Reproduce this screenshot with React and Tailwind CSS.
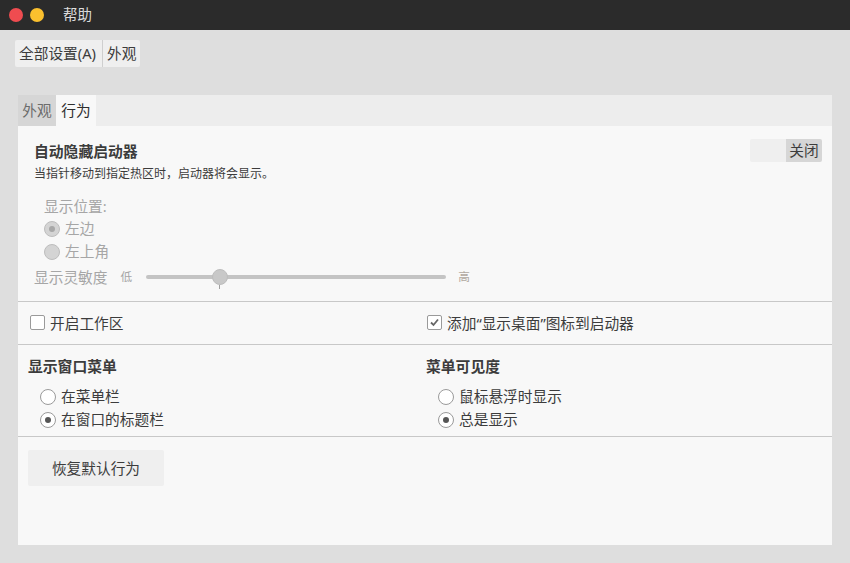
import React from 'react';

const font = { fontFamily: '"Noto Sans", "Noto Sans CJK SC", sans-serif' };

const Radio = ({ checked, disabled, label }) => (
    <div className="flex items-center gap-[5px] h-[23px]">
        <span
            className={
                'w-[16px] h-[16px] rounded-full border flex items-center justify-center ' +
                (disabled ? 'border-[#bdbdbd] bg-[#d4d4d4]' : 'border-[#9a9a9a] bg-white')
            }
        >
            {checked && <span className={'w-[6px] h-[6px] rounded-full ' + (disabled ? 'bg-[#a8a8a8]' : 'bg-[#555]')}></span>}
        </span>
        <span className={'text-[14.7px] ' + (disabled ? 'text-[#a6a6a6]' : 'text-[#3c3c3c]')}>{label}</span>
    </div>
);

const Checkbox = ({ checked, label }) => (
    <div className="flex items-center gap-[5px]">
        <span className="w-[15px] h-[15px] rounded-[2px] border border-[#9a9a9a] bg-white flex items-center justify-center">
            {checked && (
                <svg width="11" height="11" viewBox="0 0 11 11">
                    <path d="M2 5.5 L4.5 8 L9 2.5" fill="none" stroke="#666" strokeWidth="1.8" />
                </svg>
            )}
        </span>
        <span className="text-[14.7px] text-[#3c3c3c]">{label}</span>
    </div>
);

export default function App() {
    return (
        <div className="w-[850px] h-[563px] bg-[#dedede] flex flex-col overflow-hidden" style={font}>
            {/* Title bar */}
            <div className="h-[30px] bg-[#2b2b2b] flex items-center px-[9px] shrink-0">
                <span className="w-[14px] h-[14px] rounded-full bg-[#ef4c50]"></span>
                <span className="w-[14px] h-[14px] rounded-full bg-[#fbc02e] ml-[7px]"></span>
                <span className="ml-[19px] text-[14.5px] text-[#dcdcdc]">帮助</span>
            </div>

            {/* Breadcrumb */}
            <div className="flex mt-[10px] ml-[15px] h-[27px]">
                <div className="flex rounded-[2px] bg-[#efefef] text-[14.7px] text-[#3c3c3c]">
                    <span className="pl-[4px] pr-[6px] flex items-center border-r border-[#cfcfcf]">全部设置(A)</span>
                    <span className="px-[4px] flex items-center">外观</span>
                </div>
            </div>

            {/* Panel */}
            <div className="mt-[28px] ml-[18px] w-[814px] h-[450px] flex flex-col bg-[#f8f8f8]">
                <div className="h-[31px] bg-[#ededed] flex text-[14.7px] shrink-0">
                    <span className="w-[38px] flex items-center justify-center bg-[#d6d6d6] text-[#6c6c6c]">外观</span>
                    <span className="w-[40px] flex items-center justify-center bg-[#f8f8f8] text-[#2e2e2e]">行为</span>
                </div>

                {/* Auto hide */}
                <div className="h-[176px] flex flex-col pl-[16px] pr-[10px] pt-[15px] border-b border-[#c8c8c8]">
                    <div className="flex justify-between items-start">
                        <div>
                            <div className="text-[14.8px] font-bold text-[#3c3c3c] leading-[20px]">自动隐藏启动器</div>
                            <div className="text-[12px] text-[#3c3c3c] mt-[5px] leading-[16px]">当指针移动到指定热区时，启动器将会显示。</div>
                        </div>
                        <div className="flex h-[23px] mt-[-2px] rounded-[2px] overflow-hidden text-[14.7px]">
                            <span className="w-[36px] bg-[#efefef]"></span>
                            <span className="w-[36px] bg-[#d6d6d6] text-[#3c3c3c] flex items-center justify-center">关闭</span>
                        </div>
                    </div>
                    <div className="ml-[10px] mt-[13px] text-[14.7px] text-[#a6a6a6] leading-[22px]">显示位置:</div>
                    <div className="ml-[10px]">
                        <Radio checked disabled label="左边" />
                        <Radio disabled label="左上角" />
                    </div>
                    <div className="flex items-center h-[28px]">
                        <span className="text-[14.7px] text-[#a6a6a6]">显示灵敏度</span>
                        <span className="text-[11.7px] text-[#a6a6a6] ml-[13px]">低</span>
                        <div className="relative ml-[14px] w-[300px] h-[4px] rounded-full bg-[#c4c4c4]">
                            <span className="absolute left-[66px] top-[-6px] w-[16px] h-[16px] rounded-full bg-[#c8c8c8] border border-[#bdbdbd]"></span>
                            <span className="absolute left-[73px] top-[10px] w-[1px] h-[4px] bg-[#a0a0a0]"></span>
                        </div>
                        <span className="text-[11.7px] text-[#b0a8a0] ml-[12px]">高</span>
                    </div>
                </div>

                {/* Checkboxes */}
                <div className="h-[43px] flex items-center border-b border-[#c8c8c8] px-[12px]">
                    <div className="w-[397px]">
                        <Checkbox label="开启工作区" />
                    </div>
                    <Checkbox checked label="添加“显示桌面”图标到启动器" />
                </div>

                {/* Window menu */}
                <div className="h-[92px] flex border-b border-[#c8c8c8] px-[10px] pt-[10px]">
                    <div className="w-[398px]">
                        <div className="text-[14.8px] font-bold text-[#3c3c3c] leading-[22px]">显示窗口菜单</div>
                        <div className="ml-[12px] mt-[8px]">
                            <Radio label="在菜单栏" />
                            <Radio checked label="在窗口的标题栏" />
                        </div>
                    </div>
                    <div>
                        <div className="text-[14.8px] font-bold text-[#3c3c3c] leading-[22px]">菜单可见度</div>
                        <div className="ml-[12px] mt-[8px]">
                            <Radio label="鼠标悬浮时显示" />
                            <Radio checked label="总是显示" />
                        </div>
                    </div>
                </div>

                <div className="px-[10px] pt-[13px]">
                    <button className="w-[136px] h-[36px] rounded-[2px] bg-[#efefef] text-[14.7px] text-[#3c3c3c]">恢复默认行为</button>
                </div>
            </div>
        </div>
    );
}
